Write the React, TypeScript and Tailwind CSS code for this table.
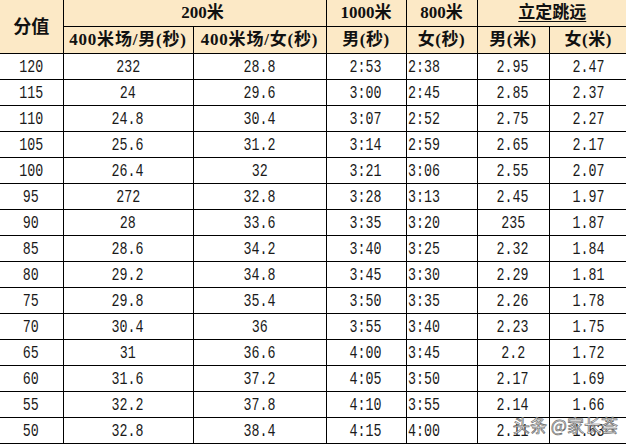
import React from "react";

const rows: string[][] = [
  ["120", "232", "28.8", "2:53", "2:38", "2.95", "2.47"],
  ["115", "24", "29.6", "3:00", "2:45", "2.85", "2.37"],
  ["110", "24.8", "30.4", "3:07", "2:52", "2.75", "2.27"],
  ["105", "25.6", "31.2", "3:14", "2:59", "2.65", "2.17"],
  ["100", "26.4", "32", "3:21", "3:06", "2.55", "2.07"],
  ["95", "272", "32.8", "3:28", "3:13", "2.45", "1.97"],
  ["90", "28", "33.6", "3:35", "3:20", "235", "1.87"],
  ["85", "28.6", "34.2", "3:40", "3:25", "2.32", "1.84"],
  ["80", "29.2", "34.8", "3:45", "3:30", "2.29", "1.81"],
  ["75", "29.8", "35.4", "3:50", "3:35", "2.26", "1.78"],
  ["70", "30.4", "36", "3:55", "3:40", "2.23", "1.75"],
  ["65", "31", "36.6", "4:00", "3:45", "2.2", "1.72"],
  ["60", "31.6", "37.2", "4:05", "3:50", "2.17", "1.69"],
  ["55", "32.2", "37.8", "4:10", "3:55", "2.14", "1.66"],
  ["50", "32.8", "38.4", "4:15", "4:00", "2.11", "1.63"],
];

const hd =
  "bg-[#fce9c6] border-black border-b border-r text-center align-middle font-bold text-[17px] text-[#111] p-0 leading-none";

export default function App() {
  return (
    <div className="relative w-[626px] h-[444px] overflow-hidden bg-white font-['Liberation_Serif','Noto_Sans_CJK_SC',serif]">
      <table className="table-fixed border-collapse w-[627px]">
        <colgroup>
          <col className="w-[63px]" />
          <col className="w-[130px]" />
          <col className="w-[133px]" />
          <col className="w-[80px]" />
          <col className="w-[71px]" />
          <col className="w-[72px]" />
          <col className="w-[78px]" />
        </colgroup>
        <thead>
          <tr className="h-[26px]">
            <th rowSpan={2} className={hd + " text-[18px] pt-[1px]"}>
              分值
            </th>
            <th colSpan={2} className={hd + " pl-[16px]"}>
              200米
            </th>
            <th className={hd}>1000米</th>
            <th className={hd}>800米</th>
            <th colSpan={2} className={hd + " border-r-0"}>
              <span className="underline underline-offset-[3px] decoration-[1px]">立定跳远</span>
            </th>
          </tr>
          <tr className="h-[27px]">
            <th className={hd + " tracking-[0.8px]"}>400米场/男(秒)</th>
            <th className={hd + " tracking-[0.8px]"}>400米场/女(秒)</th>
            <th className={hd + " tracking-[0.5px]"}>男(秒)</th>
            <th className={hd + " tracking-[0.5px]"}>女(秒)</th>
            <th className={hd + " tracking-[0.5px]"}>男(米)</th>
            <th className={hd + " border-r-0 tracking-[0.5px]"}>女(米)</th>
          </tr>
        </thead>
        <tbody>
          {rows.map((r, i) => (
            <tr key={i} className="h-[26px]">
              {r.map((c, j) => (
                <td
                  key={j}
                  className={
                    "border-black border-b p-0 align-middle leading-none text-[18px] text-[#1a1a1a] font-['Liberation_Mono',monospace] " +
                    (j === 6 ? "border-r-0 " : "border-r ") +
                    (j === 4 ? "text-left pl-[1px]" : "text-center")
                  }
                >
                  <span
                    className={
                      "inline-block scale-x-[0.74] pt-[2px] " + (j === 4 ? "origin-left" : "origin-center")
                    }
                  >
                    {c}
                  </span>
                </td>
              ))}
            </tr>
          ))}
        </tbody>
      </table>
      <div className="absolute left-[513px] top-[416px] text-[17px] leading-none text-white/90 font-['Noto_Sans_CJK_SC',sans-serif] [-webkit-text-stroke:0.7px_#6b6b6b]">
        头条 @家长荟
      </div>
    </div>
  );
}
